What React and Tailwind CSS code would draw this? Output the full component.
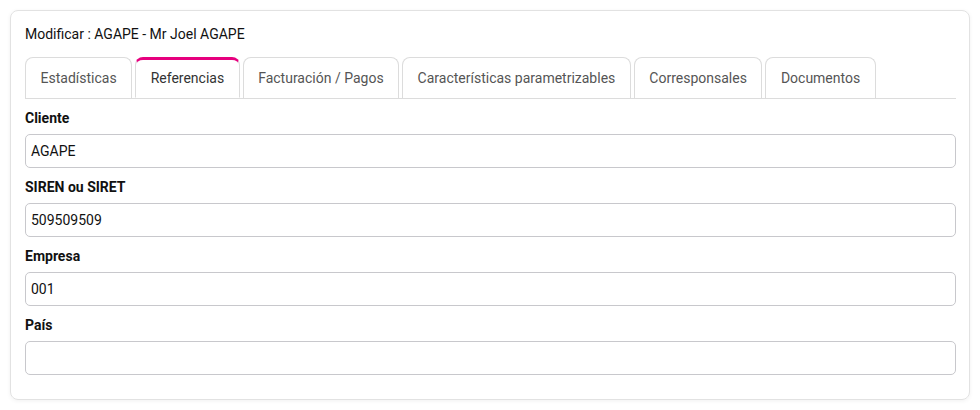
import React from "react";

const tabs = [
  "Estadísticas",
  "Referencias",
  "Facturación / Pagos",
  "Características parametrizables",
  "Corresponsales",
  "Documentos",
];

const fields = [
  { label: "Cliente", value: "AGAPE" },
  { label: "SIREN ou SIRET", value: "509509509" },
  { label: "Empresa", value: "001" },
  { label: "País", value: "" },
];

export default function App() {
  return (
    <div
      className="w-[980px] h-[410px] bg-white pt-[10px] px-[10px]"
      style={{ fontFamily: "Roboto, 'Liberation Sans', sans-serif" }}
    >
      <div className="w-[960px] h-[390px] border border-[#e2e2e2] rounded-[8px] shadow-[0_1px_4px_rgba(0,0,0,0.06)] px-[14px] pt-[13px]">
        <div className="text-[14px] leading-[20px] text-[#111]">
          Modificar : AGAPE - Mr Joel AGAPE
        </div>
        <div className="mt-[13px] flex gap-[3px] border-b border-[#dcdcdc] w-[931px]">
          {tabs.map((t, i) => {
            const active = i === 1;
            return (
              <div
                key={t}
                className={
                  active
                    ? "h-[41px] -mb-px px-[14.5px] flex items-center text-[14px] text-[#333] bg-white border border-[#dcdcdc] border-b-white border-t-[3px] border-t-[#e6007e] rounded-t-[8px]"
                    : "h-[41px] px-[14.5px] flex items-center text-[14px] text-[#555] bg-white border border-[#dcdcdc] border-b-0 rounded-t-[8px]"
                }
              >
                {t}
              </div>
            );
          })}
        </div>
        <div className="pt-[9px] w-[931px]">
          {fields.map((f) => (
            <div key={f.label} className="mb-[9px]">
              <div className="text-[14px] leading-[20px] font-bold text-[#111]">
                {f.label}
              </div>
              <div className="mt-[6px] h-[34px] border border-[#c8c8cc] rounded-[5px] px-[5px] flex items-center text-[14px] text-[#111]">
                {f.value}
              </div>
            </div>
          ))}
        </div>
      </div>
    </div>
  );
}
